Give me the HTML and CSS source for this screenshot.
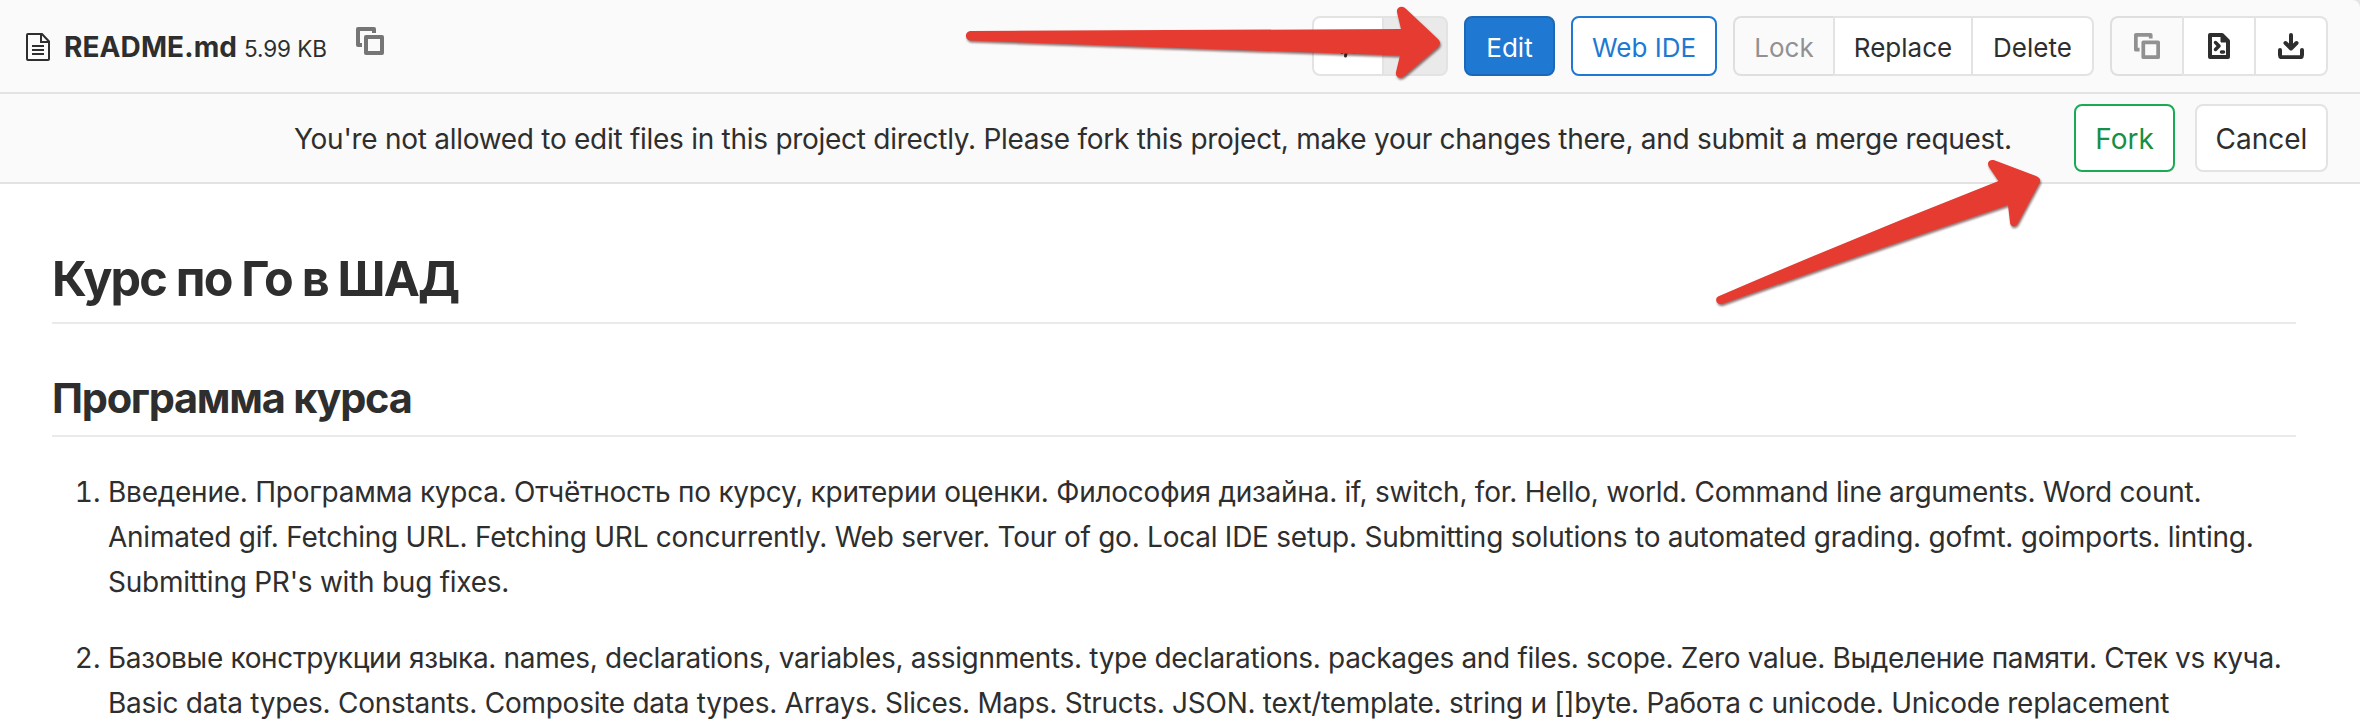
FILE: index.html
```html
<!DOCTYPE html>
<html lang="ru">
<head>
<meta charset="utf-8">
<title>README.md</title>
<link rel="stylesheet" href="styles.css">
</head>
<body>
<div class="file">
  <header class="file-header">
    <div class="file-title">
      <svg class="file-icon" width="24" height="28" viewBox="0 0 24 28"><path d="M1 2V26a1 1 0 0 0 1 1H22a1 1 0 0 0 1-1V8.500L16 1H2a1 1 0 0 0-1 1zM15 1V9H23M6 13H18M6 17H18M6 21H18"/></svg>
      <strong class="file-name">README.md</strong>
      <small class="file-size">5.99 KB</small>
      <svg class="copy-path" width="28" height="28" viewBox="0 0 28 28"><path d="M18 6V2H2V18H6"/><rect x="10" y="10" width="16" height="16"/></svg>
    </div>
    <div class="actions">
      <div class="group viewer">
        <button class="btn"><svg width="26" height="26" viewBox="0 0 26 26"><path d="M7 8L2 13.500L7 19.500M19 8L24 13.500L19 19.500M14 4L10.500 23"/></svg></button>
        <button class="btn active"><svg width="28" height="28" viewBox="0 0 28 28"><path d="M8 20H5V3H17L21 8V12M17 19L22.500 25"/></svg></button>
      </div>
      <button class="btn edit">Edit</button>
      <button class="btn ide">Web IDE</button>
      <div class="group manage">
        <button class="btn disabled lock">Lock</button>
        <button class="btn replace">Replace</button>
        <button class="btn delete">Delete</button>
      </div>
      <div class="group tools">
        <button class="btn disabled"><svg class="copy" width="26" height="26" viewBox="0 0 28 28"><path d="M18 6V2H2V18H6"/><rect x="10" y="10" width="16" height="16"/></svg></button>
        <button class="btn"><svg width="24" height="26" viewBox="0 0 24 26"><path d="M3 2H15L21 8V24H3z"/><path class="prompt" d="M8.500 9.500L12 13L8.500 16.500M14.500 19H16.500"/><path class="solid" d="M14 1V9H22z"/></svg></button>
        <button class="btn"><svg width="26" height="26" viewBox="0 0 26 26"><path d="M13 2V15M7.500 10L13 15.500L18.500 10M2 17V22Q2 24.300 4.300 24.300H21.700Q24 24.300 24 22V17"/></svg></button>
      </div>
    </div>
  </header>
  <div class="fork-bar">
    <p class="fork-text">You're not allowed to edit files in this project directly. Please fork this project, make your changes there, and submit a merge request.</p>
    <button class="btn fork">Fork</button>
    <button class="btn cancel">Cancel</button>
  </div>
  <main class="content">
    <h1>Курс по Го в ШАД</h1>
    <h2>Программа курса</h2>
    <ol>
      <li><span class="line l1">Введение. Программа курса. Отчётность по курсу, критерии оценки. Философия дизайна. if, switch, for. Hello, world. Command line arguments. Word count.</span> <span class="line l2">Animated gif. Fetching URL. Fetching URL concurrently. Web server. Tour of go. Local IDE setup. Submitting solutions to automated grading. gofmt. goimports. linting.</span> <span class="line l3">Submitting PR's with bug fixes.</span></li>
      <li><span class="line l4">Базовые конструкции языка. names, declarations, variables, assignments. type declarations. packages and files. scope. Zero value. Выделение памяти. Стек vs куча.</span> <span class="line l5">Basic data types. Constants. Composite data types. Arrays. Slices. Maps. Structs. JSON. text/template. string и []byte. Работа с unicode. Unicode replacement</span></li>
    </ol>
  </main>
</div>
<svg class="arrows" width="2360" height="724" viewBox="0 0 2360 724">
  <path d="M970 31L1401 29L1397 12C1396 8 1401 5 1405 8L1438 39Q1442 43 1438 47L1404 76C1399 80 1395 76 1396 72L1400 55.500L970 40.500C964.500 39.500 964.500 32 970 31z"/>
  <path d="M1718 296.500Q1856 237 1998.500 181L1989 167C1986 162 1990 159 1995 160.500L2036 176Q2041 178 2040 182L2018 223C2015 228 2010 227 2010 222L2008 205Q1862 254 1722 304C1717 305 1714 299 1718 296.500z"/>
</svg>
</body>
</html>
```
FILE: styles.css
```css
* { box-sizing: border-box; }
body {
  margin: 0;
  height: 724px;
  overflow: hidden;
  position: relative;
  background: #fff;
  color: #2e2e2e;
  font: 28px/45px Inter, "Noto Sans", sans-serif;
}
button { font: inherit; color: inherit; }
svg { display: block; fill: none; stroke: currentColor; }
.file { height: 724px; overflow: hidden; }
.file-header {
  display: flex;
  justify-content: space-between;
  height: 94px;
  padding: 16px 32px 16px 26px;
  background: #fafafa;
  border-bottom: 2px solid #e3e3e3;
  border-top-right-radius: 8px;
  box-shadow: 8px -8px 0 #e5e5e5;
}
.file-title { display: flex; height: 60px; align-items: center; white-space: nowrap; }
.file-icon { stroke-width: 2; margin-top: 2px; }
.file-name { margin-left: 14px; padding-top: 2px; font-weight: 700; width: 180px; letter-spacing: 0.1px; }
.file-size { font-size: 22.5px; padding-top: 5px; width: 112px; letter-spacing: -0.1px; }
.copy-path { color: #757575; stroke-width: 4; stroke-linejoin: round; margin-top: -10px; }
.actions { display: flex; gap: 16px; font-size: 26px; }
.group { display: flex; }
.btn {
  display: flex;
  align-items: center;
  justify-content: center;
  height: 60px;
  padding: 2px 0 0;
  background: #fff;
  border: 2px solid #e3e3e3;
  border-radius: 8px;
  white-space: nowrap;
}
.btn svg { stroke-width: 4; stroke-linecap: round; stroke-linejoin: round; margin-top: -3px; }
.group .btn { border-radius: 0; flex: none; }
.group .btn + .btn { border-left: 0; }
.group .btn:first-child { border-radius: 8px 0 0 8px; }
.group .btn:last-child { border-radius: 0 8px 8px 0; }
.group .disabled { background: #fafafa; color: #919191; border-color: #dfdfdf #e3e3e3 #dfdfdf #dfdfdf; }
.group .active { background: #eaeaea; }
.viewer .btn svg { stroke-width: 3; }
.btn .copy { stroke-linecap: butt; }
.btn .prompt { stroke-width: 3.5; }
.btn .solid { fill: currentColor; stroke-width: 1; }
.viewer .btn:first-child { width: 72px; }
.viewer .btn:last-child { width: 64px; }
.edit { width: 91px; background: #1f78d1; border-color: #1b69b6; color: #fff; }
.ide { width: 146px; border-color: #1f78d1; color: #1f78d1; }
.lock { width: 102px; }
.replace { width: 138px; }
.delete { width: 121px; }
.tools .btn { width: 72px; }
.tools .btn:first-child { width: 74px; }
.fork-bar {
  display: flex;
  align-items: center;
  justify-content: flex-end;
  height: 90px;
  padding: 0 32px 0 0;
  background: #fafafa;
  border-bottom: 2px solid #e3e3e3;
}
.fork-text { margin: 0; padding-top: 2px; width: 1780px; white-space: nowrap; letter-spacing: -0.275px; }
.fork-bar .btn { height: 68px; }
.fork { width: 101px; border-color: #1aaa55; color: #168f48; }
.cancel { width: 133px; margin-left: 20px; }
.content { padding: 64px 64px 0 52px; }
h1, h2 { margin: 0; border-bottom: 2px solid #eaeaea; font-weight: 700; white-space: nowrap; }
h1 { height: 76px; font-size: 48.5px; line-height: 62px; letter-spacing: -1.8px; }
h2 { height: 67px; margin-top: 46px; font-size: 41.5px; line-height: 57px; letter-spacing: -1.25px; }
ol { margin: 33px 0 0; padding: 0 0 0 56px; }
li { margin-bottom: 31px; }
.line { display: block; white-space: nowrap; }
.l1 { letter-spacing: -0.255px; }
.l2 { letter-spacing: -0.25px; }
.l3 { letter-spacing: -0.25px; }
.l4 { letter-spacing: -0.33px; }
.l5 { letter-spacing: -0.27px; }
.arrows {
  position: absolute;
  top: 0;
  left: 0;
  fill: #e53b30;
  stroke: none;
  filter: drop-shadow(1px 2px 1px rgba(60, 0, 0, 0.55));
}
```
